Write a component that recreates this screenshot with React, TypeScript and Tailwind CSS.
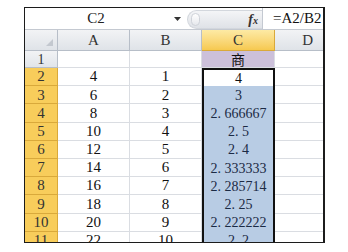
const rows: { n: number; a: string; b: string; c: string }[] = [
  { n: 2, a: '4', b: '1', c: '4' },
  { n: 3, a: '6', b: '2', c: '3' },
  { n: 4, a: '8', b: '3', c: '2. 666667' },
  { n: 5, a: '10', b: '4', c: '2. 5' },
  { n: 6, a: '12', b: '5', c: '2. 4' },
  { n: 7, a: '14', b: '6', c: '2. 333333' },
  { n: 8, a: '16', b: '7', c: '2. 285714' },
  { n: 9, a: '18', b: '8', c: '2. 25' },
  { n: 10, a: '20', b: '9', c: '2. 222222' },
  { n: 11, a: '22', b: '10', c: '2. 2' },
];

const serif = { fontFamily: '"Liberation Serif", "Noto Sans CJK SC", serif' };

export default function App() {
  return (
    <div className="w-[348px] h-[252px] bg-white pt-[7px] pl-[24px] overflow-hidden" style={serif}>
      <div className="w-[301px] h-[236px] border-l border-t border-r-2 border-b border-[#1c1c1c] overflow-hidden bg-white">
        {/* Formula bar */}
        <div className="flex h-[22px] border-b border-[#c4c9d1] bg-white">
          <div className="w-[142px] flex items-center justify-center text-[15px] text-[#222]">C2</div>
          <div className="w-[20px] flex items-center justify-center">
            <svg width="7" height="4" viewBox="0 0 7 4">
              <path d="M0 0 L7 0 L3.5 4 Z" fill="#333" />
            </svg>
          </div>
          <div className="w-[75px] h-[19px] mt-[2px] rounded-l-full bg-gradient-to-b from-[#f4f5f7] to-[#dfe2e7] border border-r-0 border-[#d3d7dd] flex items-center justify-between pl-[3px] pr-[4px]">
            <div className="w-[9px] h-[13px] rounded-full bg-gradient-to-b from-white to-[#e6e8ec] border border-[#cfd3d9]" />
            <span className="italic font-bold text-[14px] text-[#333] leading-none">
              f<span className="text-[10px]">x</span>
            </span>
          </div>
          <div className="w-px bg-[#c4c9d1]" />
          <div className="flex-1 flex items-center pl-[10px] text-[15px] text-[#111]">=A2/B2</div>
        </div>

        {/* Column headers */}
        <div className="flex h-[21px] text-[15px] text-[#333]">
          <div className="w-[33px] border-r border-b border-[#b7bec8] bg-gradient-to-b from-[#f2f3f5] to-[#dfe3e8] flex items-end justify-end pr-[4px] pb-[4px]">
            <svg width="7" height="7" viewBox="0 0 7 7">
              <path d="M7 0 L7 7 L0 7 Z" fill="#c3c8cf" />
            </svg>
          </div>
          <div className="w-[72px] border-r border-b border-[#b7bec8] bg-gradient-to-b from-[#f2f3f5] to-[#dfe3e8] flex items-center justify-center">A</div>
          <div className="w-[72px] border-r border-b border-[#b7bec8] bg-gradient-to-b from-[#f2f3f5] to-[#dfe3e8] flex items-center justify-center">B</div>
          <div className="w-[73px] border-r border-b border-[#d9a93b] bg-gradient-to-b from-[#fdeaa4] to-[#f6c94f] flex items-center justify-center">C</div>
          <div className="flex-1 border-b border-[#b7bec8] bg-gradient-to-b from-[#f2f3f5] to-[#dfe3e8] flex items-center justify-end pr-[10px]">D</div>
        </div>

        {/* Row 1 */}
        <div className="flex h-[17px] text-[14px]">
          <div className="w-[33px] border-r border-b border-[#b7bec8] bg-gradient-to-b from-[#f2f3f5] to-[#e1e5ea] flex items-center justify-center text-[#333]">1</div>
          <div className="w-[72px] border-r border-b border-[#dadde2]" />
          <div className="w-[72px] border-r border-b border-[#dadde2]" />
          <div
            className="w-[73px] border-r border-b border-[#dadde2] bg-[#ccc0da] flex items-center justify-center text-[#111]"
            style={{ fontFamily: '"Noto Sans CJK SC", sans-serif' }}
          >
            商
          </div>
          <div className="flex-1 border-b border-[#dadde2]" />
        </div>

        {/* Data rows */}
        {rows.map((r, i) => (
          <div key={r.n} className="flex h-[18.2px] text-[15px] text-[#111]">
            <div className="w-[33px] border-r border-b border-[#d9a93b] bg-[#f8cd5b] flex items-center justify-center text-[#333]">{r.n}</div>
            <div className="w-[72px] border-r border-b border-[#dadde2] flex items-center justify-center">{r.a}</div>
            <div className="w-[72px] border-r border-b border-[#dadde2] flex items-center justify-center">{r.b}</div>
            <div
              className={`w-[73px] border-x-2 border-[#111] flex items-center justify-center text-[14px] ${
                i === 0 ? 'border-t-2 bg-white' : 'bg-[#b8cce4] text-[#1b2a44]'
              }`}
            >
              {r.c}
            </div>
            <div className="flex-1 border-b border-[#dadde2]" />
          </div>
        ))}
      </div>
    </div>
  );
}
